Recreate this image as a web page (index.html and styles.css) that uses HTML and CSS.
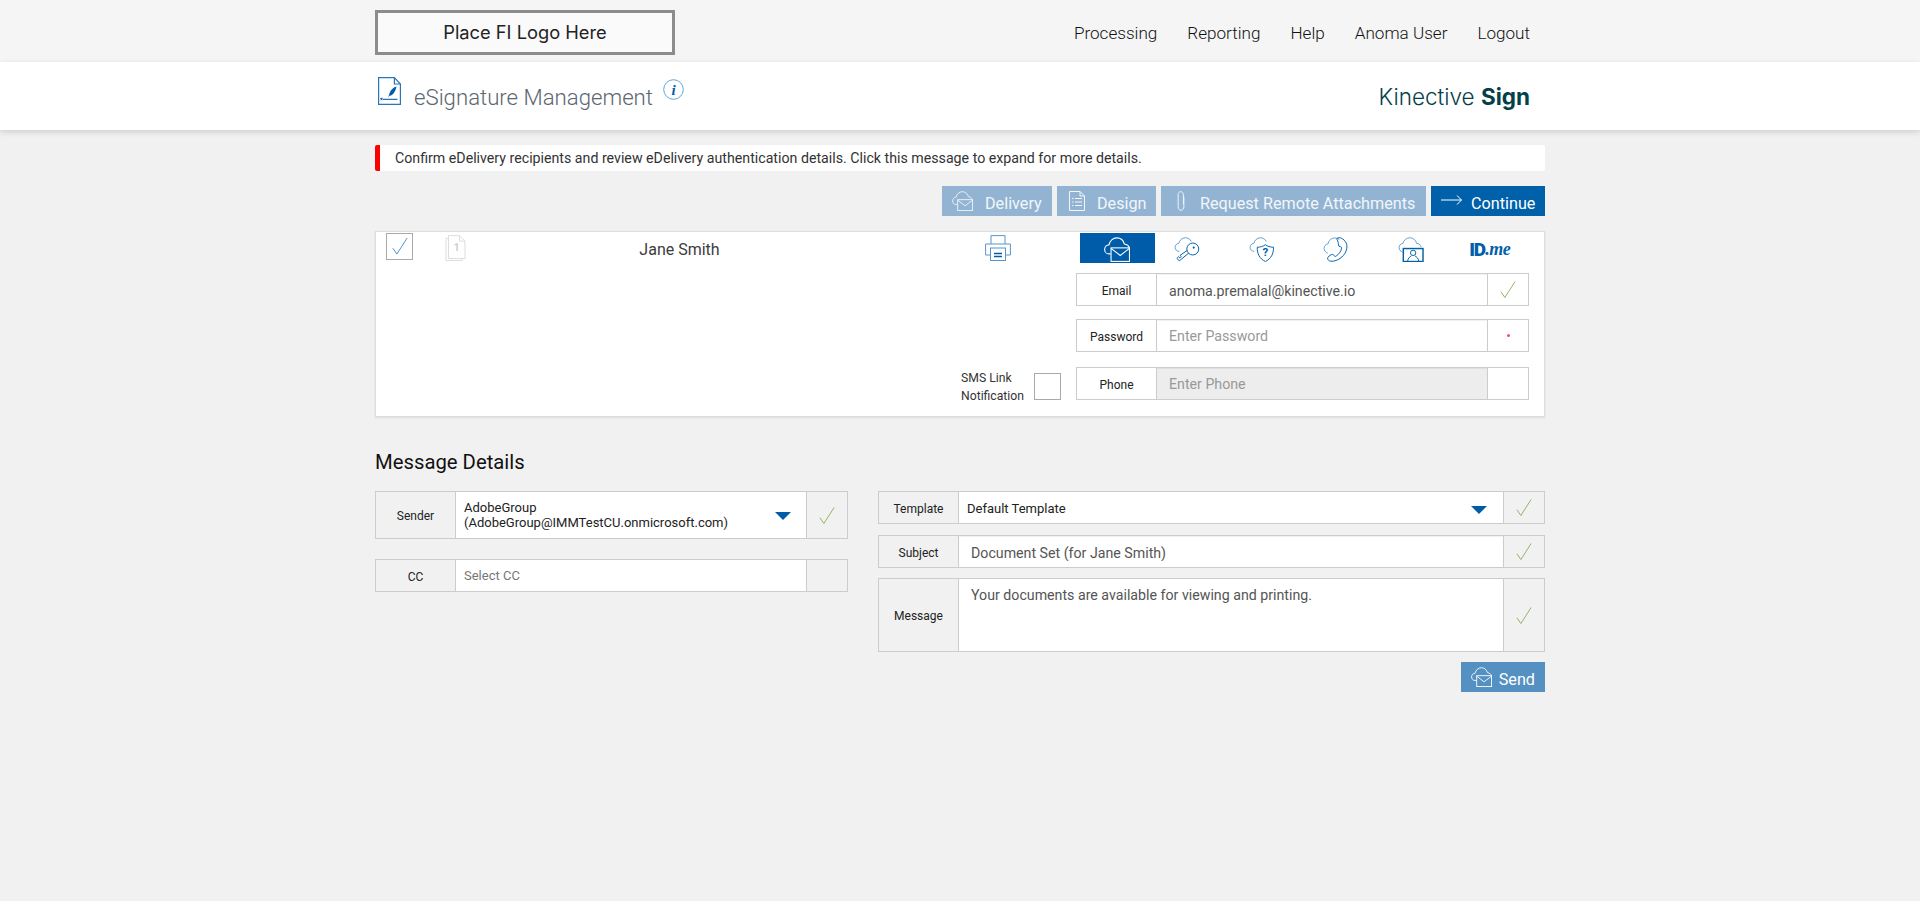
FILE: index.html
```html
<!DOCTYPE html>
<html lang="en">
<head>
    <meta charset="UTF-8">
    <title>eSignature Management</title>
    <link rel="stylesheet" href="styles.css">
</head>
<body>

    <!-- shared icons -->
    <svg class="icon-defs" xmlns="http://www.w3.org/2000/svg">
        <symbol id="i-envelope" viewBox="0 0 24 23">
            <path class="soft" d="M6 15.500H4.500C2.200 15.500.6 13.600.6 11.400c0-2.300 1.800-4.100 4-4.200C5.400 3.600 8.200.8 11.800.8c3.500 0 6.200 2.400 7 5.700 2.300.3 4 1.600 4.700 3.500"/>
            <rect x="6.500" y="10" width="17" height="12.500"/>
            <path d="M6.500 10.500l8.500 6.500 8.500-6.500"/>
        </symbol>
        <symbol id="i-check" viewBox="0 0 18 20">
            <path d="M1 12.500L5.500 19 17 1"/>
        </symbol>
    </svg>

    <header class="top-bar">
        <div class="container top-inner">
            <div class="fi-logo">Place FI Logo Here</div>
            <nav class="top-nav">
                <a href="#">Processing</a>
                <a href="#">Reporting</a>
                <a href="#">Help</a>
                <a href="#">Anoma User</a>
                <a href="#">Logout</a>
            </nav>
        </div>
    </header>

    <div class="title-bar">
        <div class="container title-inner">
            <svg class="doc-sign" viewBox="0 0 23 28">
                <path class="doc-line" d="M.6.6h15.800l6 6.400v20.400H.6z"/>
                <path class="doc-line" d="M16.400.6v6.400h6"/>
                <path class="doc-fill" d="M18.500 9.500c-3.500 1-6.500 4-7.500 8.500l-.8 2.200 1.400-1.500c3.500-.5 5.700-3.300 6.900-9.200z"/>
                <path class="doc-line" d="M5 22.300h14.500M2.500 21l2 2m0-2l-2 2"/>
            </svg>
            <h1 class="page-title">eSignature Management</h1>
            <svg class="info-icon" viewBox="0 0 21 21">
                <circle cx="10.500" cy="10.500" r="9.800"/>
                <text x="10.500" y="15.500">i</text>
            </svg>
            <div class="brand">Kinective <strong>Sign</strong></div>
        </div>
    </div>

    <main class="container">
        <div class="alert">Confirm eDelivery recipients and review eDelivery authentication details. Click this message to expand for more details.</div>

        <div class="actions">
            <button class="btn btn-off btn-delivery">
                <svg class="btn-icon line-icon"><use href="#i-envelope"/></svg>Delivery
            </button>
            <button class="btn btn-off btn-design">
                <svg class="btn-icon-sm line-icon" viewBox="0 0 16 20">
                    <path d="M.5.5h10.500l4.500 4.500v14.500H.5zM11 .5v4.500h4.500"/>
                    <path d="M3 7.500h1.500M6 7.500h7M3 11h1.500M6 11h7M3 14.500h1.500M6 14.500h7"/>
                </svg>Design
            </button>
            <button class="btn btn-off btn-attach">
                <svg class="btn-icon-sm line-icon clip" viewBox="0 0 11 21">
                    <path d="M8 6v10.500c0 1.800-1.100 3.800-3 3.800s-3-1.700-3-3.800V4c0-1.900 1-3.300 2.700-3.300S7.500 2.100 7.500 4v10"/>
                </svg>Request Remote Attachments
            </button>
            <button class="btn btn-on btn-continue">
                <svg class="btn-arrow line-icon" viewBox="0 0 21 10">
                    <path d="M0 5h20.500M16 .5l4.500 4.500-4.500 4.500"/>
                </svg>Continue
            </button>
        </div>

        <section class="recipient">
            <div class="recipient-left">
                <div class="recipient-top">
                    <div class="check-box check-blue">
                        <svg viewBox="0 0 18 20"><use href="#i-check"/></svg>
                    </div>
                    <svg class="page-num" viewBox="0 0 21 26">
                        <path d="M3.500 3.500H1v22h16v-2"/>
                        <path d="M3.500.6h11l5.500 5.500v17.400H3.500zM14.500.6v5.500H20"/>
                        <text x="11.500" y="15.500">1</text>
                    </svg>
                    <div class="recipient-name">Jane Smith</div>
                    <svg class="printer" viewBox="0 0 26 26">
                        <path d="M6 9V.6h14V9"/>
                        <path d="M5.500 20H.6V9h24.800v11h-5"/>
                        <rect class="print-sheet" x="5.500" y="13" width="15" height="12.500"/>
                        <path class="print-lines" d="M9 18.500h8M9 21.500h8"/>
                    </svg>
                </div>
                <div class="sms-link">
                    <label class="sms-label">SMS Link<br>Notification</label>
                    <div class="check-box"></div>
                </div>
            </div>

            <div class="auth-col">
                <div class="auth-tabs">
                    <div class="auth-tab active">
                        <svg class="tab-icon"><use href="#i-envelope"/></svg>
                    </div>
                    <div class="auth-tab">
                        <svg class="tab-icon" viewBox="0 0 26 26">
                            <path class="soft" d="M5 15C2.400 15 .6 13 .6 10.800 .6 8.500 2.400 6.700 4.500 6.600 5.300 3.300 8 .8 11.300.8c2.700 0 5 1.500 6.200 3.800"/>
                            <circle cx="19" cy="12.500" r="6.200"/>
                            <circle class="dot" cx="20" cy="11" r="1.100"/>
                            <path d="M14.700 16.800L5 24.800l-2.500-2.600 1.800-1.700 1.200 1.200 1.500-1.400-1.200-1.200L13.200 14"/>
                        </svg>
                    </div>
                    <div class="auth-tab">
                        <svg class="tab-icon" viewBox="0 0 26 26">
                            <path class="soft" d="M5 15C2.400 15 .6 13 .6 10.800 .6 8.500 2.400 6.700 4.500 6.600 5.300 3.300 8 .8 11.300.8c2.700 0 5 1.500 6.200 3.800"/>
                            <path d="M16.500 8c2.300 1.800 5 2.500 8.500 2.700 0 6.800-2.400 11.800-8.500 14.800C10.400 22.500 8 17.500 8 10.700 11.500 10.500 14.200 9.800 16.500 8z"/>
                            <text class="shield-q" x="16.500" y="20">?</text>
                        </svg>
                    </div>
                    <div class="auth-tab">
                        <svg class="tab-icon" viewBox="0 0 26 26">
                            <path class="soft" d="M4.500 17C2.300 16 .6 14.300.6 11.800.6 9.300 2.400 7.400 4.600 7.200 5.300 3.600 8.200 1 11.600 1c2 0 3.600.7 5 2"/>
                            <path d="M14 1.500c1.500-.9 3-1 4.500-.3 4.700 2.200 7 7 5.300 12.500-1.600 5.200-6.800 10.200-13 11.300-2.400.4-4.500.2-5.600-.8-1-.9-1.200-2.400-.4-3.400 1-1.300 3-2.500 4.500-2.700 1-.1 1.500.7 1.800 1.400.5 1 1.200.9 2.200.2 2.900-2 5-5 5.500-8 .2-1.200-.6-1.600-1.700-1.700-1-.1-1.500-.7-1.500-1.700-.1-1.800-.3-3.700-1.600-5.800z"/>
                        </svg>
                    </div>
                    <div class="auth-tab">
                        <svg class="tab-icon" viewBox="0 0 26 26">
                            <path class="soft" d="M4 15.500C2 15 .6 13.200.6 11 .6 8.600 2.400 6.800 4.600 6.700 5.400 3.400 8.300.8 11.800.8c3.600 0 6.300 2.500 7 5.800 2.600.1 4.500 2 4.700 4"/>
                            <rect class="heavy" x="5" y="12" width="20.500" height="13.500"/>
                            <circle cx="15.200" cy="16.500" r="2.800"/>
                            <path d="M9.500 25c.3-3 2.500-4.500 3.800-5.300M21 25c-.3-3-2.500-4.500-3.800-5.300"/>
                        </svg>
                    </div>
                    <div class="auth-tab idme"><b>ID</b><i>.me</i></div>
                </div>

                <div class="field field-email">
                    <div class="field-label">Email</div>
                    <input class="field-input" type="text" value="anoma.premalal@kinective.io">
                    <div class="field-check"><svg class="ok-mark"><use href="#i-check"/></svg></div>
                </div>
                <div class="field field-password">
                    <div class="field-label">Password</div>
                    <input class="field-input" type="text" placeholder="Enter Password">
                    <div class="field-check"><span class="required-dot"></span></div>
                </div>
                <div class="field field-phone">
                    <div class="field-label">Phone</div>
                    <input class="field-input" type="text" placeholder="Enter Phone" disabled>
                    <div class="field-check"></div>
                </div>
            </div>
        </section>

        <h2 class="section-title">Message Details</h2>

        <section class="message-grid">
            <div class="message-col-left">
                <div class="field field-grey field-sender">
                    <div class="field-label">Sender</div>
                    <div class="field-select">
                        <span>AdobeGroup<br>(AdobeGroup@IMMTestCU.onmicrosoft.com)</span>
                        <span class="caret"></span>
                    </div>
                    <div class="field-check"><svg class="ok-mark"><use href="#i-check"/></svg></div>
                </div>
                <div class="field field-grey field-cc">
                    <div class="field-label">CC</div>
                    <div class="field-select placeholder">Select CC</div>
                    <div class="field-check"></div>
                </div>
            </div>

            <div class="message-col-right">
                <div class="field field-grey field-template">
                    <div class="field-label">Template</div>
                    <div class="field-select template-select">
                        <span>Default Template</span>
                        <span class="caret"></span>
                    </div>
                    <div class="field-check"><svg class="ok-mark"><use href="#i-check"/></svg></div>
                </div>
                <div class="field field-grey">
                    <div class="field-label">Subject</div>
                    <input class="field-input" type="text" value="Document Set (for Jane Smith)">
                    <div class="field-check"><svg class="ok-mark"><use href="#i-check"/></svg></div>
                </div>
                <div class="field field-grey field-message">
                    <div class="field-label">Message</div>
                    <textarea class="field-text">Your documents are available for viewing and printing.</textarea>
                    <div class="field-check"><svg class="ok-mark"><use href="#i-check"/></svg></div>
                </div>
                <div class="send-row">
                    <button class="btn btn-send">
                        <svg class="btn-icon line-icon"><use href="#i-envelope"/></svg>Send
                    </button>
                </div>
            </div>
        </section>
    </main>

</body>
</html>
```

FILE: styles.css
```css
* {
    margin: 0;
    padding: 0;
    box-sizing: border-box;
}

html, body {
    height: 100%;
    overflow: hidden;
}

body {
    font-family: Roboto, "Liberation Sans", sans-serif;
    background-color: #f1f1f1;
    color: #333;
}

.icon-defs {
    position: absolute;
    width: 0;
    height: 0;
}

.container {
    width: 1170px;
    margin: 0 auto;
}

/* top bar */
.top-bar {
    background: #f5f5f5;
    height: 62px;
}

.top-inner {
    display: flex;
    justify-content: space-between;
    align-items: flex-start;
    padding: 10px 15px 0 0;
}

.fi-logo {
    width: 300px;
    height: 45px;
    border: 3px solid #8c8c8c;
    background: #fafafa;
    color: #222;
    font-family: Inter, sans-serif;
    font-size: 18.300px;
    line-height: 39px;
    text-align: center;
}

.top-nav {
    display: flex;
    gap: 30px;
    padding-top: 13px;
}

.top-nav a {
    color: #111;
    font-size: 17.100px;
    font-weight: 300;
    line-height: 20px;
    text-decoration: none;
}

/* title bar */
.title-bar {
    background: #fff;
    height: 68px;
    box-shadow: 0 2px 6px rgba(0, 0, 0, 0.15);
    position: relative;
}

.title-inner {
    display: flex;
    align-items: flex-start;
    padding: 15px 15px 0 3px;
}

.doc-sign {
    width: 23px;
    height: 28px;
    flex: none;
}

.doc-line {
    fill: none;
    stroke: #2a75b8;
    stroke-width: 1.200;
}

.doc-fill {
    fill: #005ca9;
}

.page-title {
    margin-left: 13px;
    padding-top: 4px;
    font-size: 22.200px;
    font-weight: 300;
    line-height: 32px;
    color: #5c6670;
}

.info-icon {
    width: 21px;
    height: 21px;
    margin: 2px 0 0 10px;
    flex: none;
}

.info-icon circle {
    fill: none;
    stroke: #5fa5d8;
}

.info-icon text {
    font-family: "Liberation Serif", serif;
    font-size: 15px;
    font-weight: bold;
    font-style: italic;
    text-anchor: middle;
    fill: #005ca9;
}

.brand {
    margin-left: auto;
    padding-top: 5px;
    font-family: Inter, sans-serif;
    font-size: 22.500px;
    font-weight: 300;
    line-height: 30px;
    color: #053f4a;
}

.brand strong {
    font-weight: 700;
}

/* alert */
.alert {
    margin-top: 15px;
    height: 26px;
    padding-left: 15px;
    background: #fff;
    border-left: 5px solid #f00;
    border-radius: 2px;
    color: #333;
    font-size: 14.200px;
    line-height: 26px;
}

/* action buttons */
.actions {
    display: flex;
    justify-content: flex-end;
    gap: 5px;
    margin: 15px 0;
}

.btn {
    display: flex;
    align-items: center;
    height: 30px;
    padding-top: 4px;
    border: none;
    color: #fff;
    font-family: Roboto, sans-serif;
    font-size: 16.200px;
    cursor: pointer;
}

.btn-off {
    background: #92b4d2;
    color: #f2f6fa;
}

.btn-on {
    background: #0060a9;
}

.btn-send {
    background: #5590c2;
    padding: 4px 10px 0;
}

.btn-delivery {
    width: 110px;
    padding-left: 10px;
}

.btn-design {
    width: 99px;
    padding-left: 12px;
}

.btn-attach {
    width: 265px;
    padding-left: 15px;
}

.btn-continue {
    width: 114px;
    padding-left: 10px;
}

.line-icon {
    fill: none;
    stroke: currentColor;
}

.btn-icon {
    width: 21px;
    height: 20px;
    margin: -4px 12px 0 0;
    flex: none;
    fill: none;
    stroke: currentColor;
}

.btn-send .btn-icon {
    margin-right: 7px;
}

.btn-icon-sm {
    width: 16px;
    height: 20px;
    margin: -4px 12px 0 0;
    flex: none;
}

.clip {
    width: 11px;
    margin-right: 13px;
}

.btn-arrow {
    width: 21px;
    height: 10px;
    margin: -6px 9px 0 0;
    flex: none;
}

/* recipient card */
.recipient {
    display: flex;
    height: 186px;
    background: #fff;
    border: 1px solid #ddd;
    box-shadow: 0 1px 2px rgba(0, 0, 0, 0.08);
}

.recipient-left {
    flex: 1;
    display: flex;
    flex-direction: column;
    justify-content: space-between;
    padding: 1px 15px 16px 10px;
}

.recipient-top {
    display: flex;
    align-items: flex-start;
}

.check-box {
    width: 27px;
    height: 27px;
    flex: none;
    background: #fff;
    border: 1px solid #aaa;
}

.check-blue svg {
    display: block;
    width: 16px;
    height: 22px;
    margin: 1px 0 0 5px;
    fill: none;
    stroke: #2f86d1;
}

.page-num {
    width: 21px;
    height: 26px;
    margin: 2px 0 0 32px;
    flex: none;
    fill: #fff;
    stroke: #ddd;
}

.page-num text {
    font-size: 10px;
    font-weight: bold;
    text-anchor: middle;
    fill: #ccc;
    stroke: none;
}

.recipient-name {
    flex: 1;
    padding: 7px 92px 0 0;
    font-size: 16px;
    line-height: 20px;
    text-align: center;
    color: #3c3c3c;
}

.printer {
    width: 26px;
    height: 26px;
    margin: 2px 50px 0 0;
    flex: none;
    fill: none;
    stroke: #5a94c8;
}

.print-sheet {
    fill: #fff;
}

.print-lines {
    stroke: #005ca9;
    stroke-width: 1.400;
}

.sms-link {
    display: flex;
    justify-content: flex-end;
    align-items: flex-end;
    gap: 10px;
}

.sms-label {
    margin-bottom: -5px;
    font-size: 12.200px;
    line-height: 18px;
    color: #333;
}

.auth-col {
    width: 468px;
    flex: none;
    padding-right: 15px;
}

.auth-tabs {
    display: flex;
    margin: 1px 0 10px 4px;
}

.auth-tab {
    width: 76px;
    height: 30px;
    display: flex;
    align-items: center;
    justify-content: center;
    padding-right: 11px;
    color: #0060a9;
}

.auth-tab.active {
    padding-right: 0;
    background: #005ca9;
    color: #fff;
}

.tab-icon {
    width: 26px;
    height: 25px;
    margin-top: 2px;
    fill: none;
    stroke: currentColor;
}

.tab-icon .soft, .btn-icon .soft {
    opacity: 0.6;
}

.tab-icon .heavy {
    stroke-width: 1.500;
}

.tab-icon .dot {
    fill: currentColor;
    stroke: none;
}

.shield-q {
    font-size: 12px;
    font-weight: bold;
    text-anchor: middle;
    fill: currentColor;
    stroke: none;
}

.idme {
    padding: 3px 4px 0 0;
    font-size: 19px;
    letter-spacing: -1px;
}

.idme b {
    font-weight: 900;
}

.idme i {
    font-family: "Liberation Serif", serif;
    font-size: 18px;
    font-weight: bold;
    letter-spacing: -0.500px;
}

/* form rows */
.field {
    display: flex;
    height: 33px;
    background: #fff;
    border: 1px solid #ccc;
}

.field-password {
    margin-top: 13px;
}

.field-phone {
    margin-top: 15px;
}

.field-label {
    width: 80px;
    flex: none;
    display: flex;
    align-items: center;
    justify-content: center;
    padding-top: 3px;
    border-right: 1px solid #ccc;
    color: #222;
    font-size: 12px;
}

.field-sender .field-label, .field-message .field-label {
    padding-top: 1px;
}

.field-grey .field-label {
    background: #f1f1f1;
}

.field-input {
    flex: 1;
    min-width: 0;
    height: 100%;
    padding: 2px 12px 0;
    border: none;
    outline: none;
    background: #fff;
    box-shadow: inset 0 1px 1px rgba(0, 0, 0, 0.06);
    font-family: Roboto, sans-serif;
    font-size: 14.200px;
    color: #555;
}

.field-password .field-input, .field-phone .field-input {
    padding-top: 0;
}

.field-input::placeholder {
    color: #999;
    opacity: 1;
}

.field-input:disabled {
    background: #ededed;
}

.field-check {
    width: 41px;
    flex: none;
    display: flex;
    align-items: center;
    justify-content: center;
    border-left: 1px solid #ccc;
}

.field-grey .field-check {
    background: #f1f1f1;
}

.ok-mark {
    width: 16px;
    height: 19px;
    fill: none;
    stroke: #86ad55;
}

.required-dot {
    width: 3px;
    height: 3px;
    border-radius: 50%;
    background: #f0506e;
}

/* message details */
.section-title {
    margin-top: 33px;
    font-size: 20.300px;
    font-weight: 400;
    line-height: 24px;
    color: #111;
}

.message-grid {
    display: flex;
    gap: 30px;
    margin-top: 17px;
}

.message-col-left {
    width: 473px;
    flex: none;
}

.message-col-right {
    flex: 1;
}

.message-col-right .field {
    margin-bottom: 10px;
}

.message-col-right .field-template {
    margin-bottom: 11px;
}

.field-sender {
    height: 48px;
}

.field-cc {
    margin-top: 20px;
}

.field-select {
    flex: 1;
    min-width: 0;
    display: flex;
    align-items: center;
    justify-content: space-between;
    padding: 0 15px 0 8px;
    font-size: 13px;
    line-height: 15px;
    color: #222;
}

.template-select {
    padding: 2px 16px 0 8px;
}

.placeholder {
    color: #777;
}

.caret {
    width: 0;
    height: 0;
    flex: none;
    margin-top: 2px;
    border-left: 8px solid transparent;
    border-right: 8px solid transparent;
    border-top: 8px solid #005ca9;
}

.field-message {
    height: 74px;
}

.field-text {
    flex: 1;
    min-width: 0;
    padding: 8px 12px;
    border: none;
    outline: none;
    resize: none;
    font-family: Roboto, sans-serif;
    font-size: 14.200px;
    line-height: 17px;
    color: #555;
}

.send-row {
    display: flex;
    justify-content: flex-end;
}
```
